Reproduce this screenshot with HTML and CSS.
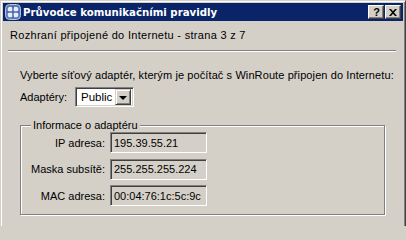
FILE: index.html
```html
<!DOCTYPE html>
<html lang="cs">
<head>
<meta charset="utf-8">
<title>Průvodce komunikačními pravidly</title>
<link rel="stylesheet" href="styles.css">
</head>
<body>
<div class="window">
  <div class="caption">
    <svg class="app-icon" width="16" height="16" viewBox="0 0 16 16">
      <rect x="0.5" y="0.5" width="15" height="15" rx="4" fill="#5877b8" stroke="#b8c4e2"/>
      <circle cx="5.3" cy="5.3" r="2.6" fill="#e8ecf6"/>
      <circle cx="10.7" cy="5.3" r="2.6" fill="#e8ecf6"/>
      <circle cx="5.3" cy="10.7" r="2.6" fill="#e8ecf6"/>
      <circle cx="10.7" cy="10.7" r="2.6" fill="#e8ecf6"/>
      <rect x="7.3" y="2" width="1.4" height="12" fill="#4a69ad"/>
      <rect x="2" y="7.3" width="12" height="1.4" fill="#4a69ad"/>
    </svg>
    <span class="caption-title">Průvodce komunikačními pravidly</span>
    <div class="caption-buttons">
      <span class="cap-btn help">?</span>
      <span class="cap-btn close">
        <svg width="8" height="7" viewBox="0 0 8 7"><path d="M0 0h2l2 2.2L6 0h2L5 3.5 8 7H6L4 4.8 2 7H0l3-3.5z" fill="#000"/></svg>
      </span>
    </div>
  </div>
  <div class="header">Rozhraní připojené do Internetu - strana 3 z 7</div>
  <div class="separator"></div>
  <div class="content">
    <p class="intro">Vyberte síťový adaptér, kterým je počítač s WinRoute připojen do Internetu:</p>
    <div class="adapter-row">
      <span class="label">Adaptéry:</span>
      <div class="combo">
        <span class="combo-value">Public</span>
        <span class="combo-btn"><span class="arrow"></span></span>
      </div>
    </div>
    <fieldset class="group">
      <legend>Informace o adaptéru</legend>
      <div class="fields">
        <span class="flabel">IP adresa:</span>
        <span class="field">195.39.55.21</span>
        <span class="flabel">Maska subsítě:</span>
        <span class="field">255.255.255.224</span>
        <span class="flabel">MAC adresa:</span>
        <span class="field">00:04:76:1c:5c:9c</span>
      </div>
    </fieldset>
  </div>
</div>
</body>
</html>
```

FILE: styles.css
```css
html, body {
  margin: 0;
  padding: 0;
  background: #d4d0c8;
}
body {
  font-family: "Liberation Sans", Arial, sans-serif;
  font-size: 11px;
  color: #000;
  height: 226px;
  overflow: hidden;
}
.window {
  width: 406px;
  height: 232px;
  box-sizing: border-box;
  background: #d4d0c8;
  border-top: 1px solid #d4d0c8;
  border-left: 1px solid #d4d0c8;
  border-right: 1px solid #404040;
  border-bottom: 1px solid #404040;
  box-shadow: inset 1px 1px #fff, inset -1px -1px #808080;
  padding: 2px;
  overflow: hidden;
}
.caption {
  height: 18px;
  background: #0a246a;
  display: flex;
  align-items: center;
  padding-left: 2px;
  padding-right: 2px;
}
.app-icon {
  display: block;
  flex: none;
}
.caption-title {
  color: #fff;
  font-family: "DejaVu Sans", Verdana, sans-serif;
  font-weight: bold;
  font-size: 10.2px;
  margin-left: 2px;
  flex: 1;
  white-space: nowrap;
}
.caption-buttons {
  display: flex;
  gap: 1px;
}
.cap-btn {
  width: 16px;
  height: 14px;
  box-sizing: border-box;
  background: #d4d0c8;
  border-top: 1px solid #fff;
  border-left: 1px solid #fff;
  border-right: 1px solid #404040;
  border-bottom: 1px solid #404040;
  box-shadow: inset -1px -1px #808080;
  display: flex;
  align-items: center;
  justify-content: center;
}
.cap-btn.help {
  font-weight: bold;
  font-size: 11px;
  line-height: 12px;
  padding-left: 1px;
}
.header {
  padding: 7px 8px 0 7px;
  line-height: 14px;
  height: 14px;
  letter-spacing: 0.3px;
}
.separator {
  margin: 8px 7px 0 5px;
  border-top: 1px solid #808080;
  border-bottom: 1px solid #fff;
}
.content {
  padding: 0 0 0 17px;
}
.intro {
  margin: 16px 0 0 0;
  line-height: 14px;
  letter-spacing: 0.1px;
}
.adapter-row {
  display: flex;
  align-items: center;
  margin-top: 5px;
}
.label {
  width: 55px;
  flex: none;
}
.combo {
  width: 59px;
  height: 20px;
  box-sizing: border-box;
  background: #fff;
  border-top: 1px solid #808080;
  border-left: 1px solid #808080;
  border-right: 1px solid #fff;
  border-bottom: 1px solid #fff;
  box-shadow: inset 1px 1px #404040, inset -1px -1px #d4d0c8;
  display: flex;
  align-items: center;
  padding: 2px;
}
.combo-value {
  flex: 1;
  font-size: 11.5px;
  padding-left: 3px;
}
.combo-btn {
  width: 16px;
  height: 16px;
  box-sizing: border-box;
  background: #d4d0c8;
  border-top: 1px solid #d4d0c8;
  border-left: 1px solid #d4d0c8;
  border-right: 1px solid #404040;
  border-bottom: 1px solid #404040;
  box-shadow: inset 1px 1px #fff, inset -1px -1px #808080;
  display: flex;
  align-items: center;
  justify-content: center;
}
.arrow {
  width: 0;
  height: 0;
  border-left: 4px solid transparent;
  border-right: 4px solid transparent;
  border-top: 4px solid #000;
  margin-top: 1px;
}
.group {
  margin: 11px 0 0 0;
  width: 365px;
  height: 97px;
  box-sizing: border-box;
  border: 1px solid #808080;
  box-shadow: inset 1px 1px #fff, 1px 1px #fff;
  padding: 0;
}
.group legend {
  padding: 0 2px;
  margin-left: 10px;
  background: #d4d0c8;
  line-height: 14px;
}
.fields {
  display: grid;
  grid-template-columns: 84px 97px;
  column-gap: 5px;
  row-gap: 5.5px;
  align-items: center;
}
.flabel {
  text-align: right;
}
.field {
  height: 21px;
  box-sizing: border-box;
  border-top: 1px solid #808080;
  border-left: 1px solid #808080;
  border-right: 1px solid #fff;
  border-bottom: 1px solid #fff;
  box-shadow: inset 1px 1px #404040, inset -1px -1px #d4d0c8;
  padding: 0 3px;
  display: flex;
  align-items: center;
  font-size: 11px;
  white-space: nowrap;
}
```
